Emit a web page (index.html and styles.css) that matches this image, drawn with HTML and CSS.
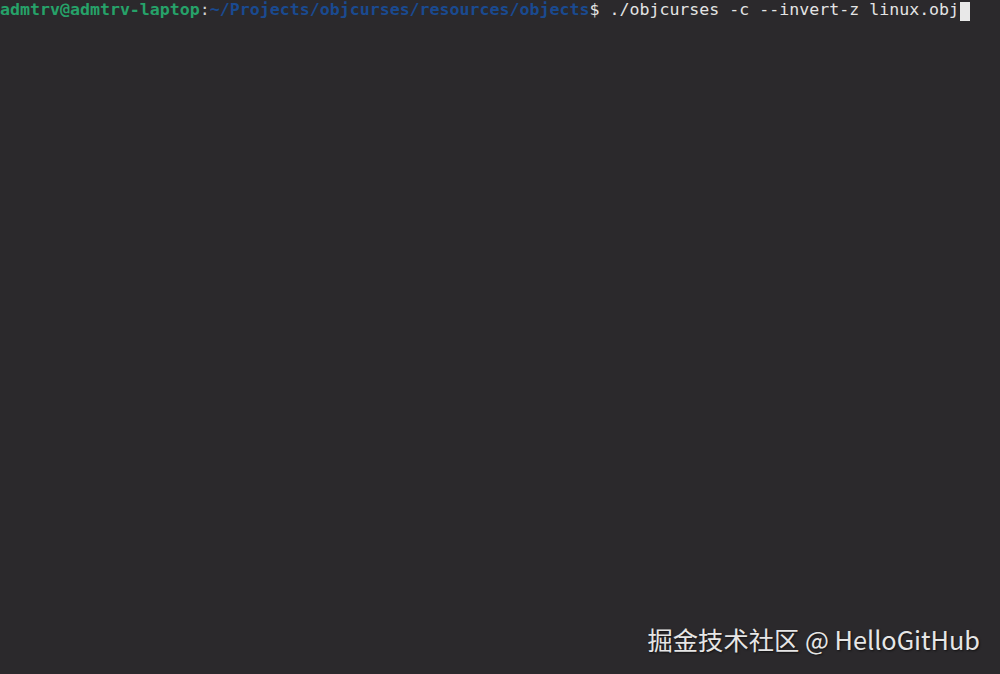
FILE: index.html
```html
<!DOCTYPE html>
<html lang="en">

<head>
    <meta charset="UTF-8">
    <meta name="viewport" content="width=device-width, initial-scale=1.0">
    <title>Terminal - objcurses</title>
    <link rel="stylesheet" href="styles.css">
</head>

<body>
    <!-- Terminal window -->
    <div class="terminal">
        <div class="line">
            <span class="user">admtrv@admtrv-laptop</span><span class="sep">:</span><span class="path">~/Projects/objcurses/resources/objects</span><span class="cmd">$ ./objcurses -c --invert-z linux.obj</span><span class="cursor"></span>
        </div>
    </div>

    <!-- Watermark -->
    <div class="watermark">掘金技术社区 @ HelloGitHub</div>
</body>

</html>
```

FILE: styles.css
```css
* {
    box-sizing: border-box;
    margin: 0;
    padding: 0;
}

body {
    width: 1000px;
    height: 674px;
    background-color: #2b292c;
    font-family: "DejaVu Sans Mono", "Liberation Mono", monospace;
    display: flex;
    flex-direction: column;
    justify-content: space-between;
    overflow: hidden;
}

.line {
    display: flex;
    align-items: flex-start;
    height: 22px;
    font-size: 16.6px;
    line-height: 20px;
    color: #e4e4e4;
    white-space: pre;
}

.user {
    color: #26a269;
    font-weight: bold;
}

.sep {
    color: #d0d0d0;
}

.path {
    color: #1a4a90;
    font-weight: bold;
}

.cursor {
    display: inline-block;
    width: 10px;
    height: 19px;
    margin-top: 2px;
    margin-left: 1px;
    background-color: #e8e8e8;
}

.watermark {
    align-self: flex-end;
    margin: 0 20px 19px 0;
    font-family: "Noto Sans CJK SC", "Noto Sans", sans-serif;
    font-size: 25.3px;
    line-height: 32px;
    color: #e6e6e6;
    text-shadow: 1px 1px 2px rgba(0, 0, 0, 0.6);
}
```
